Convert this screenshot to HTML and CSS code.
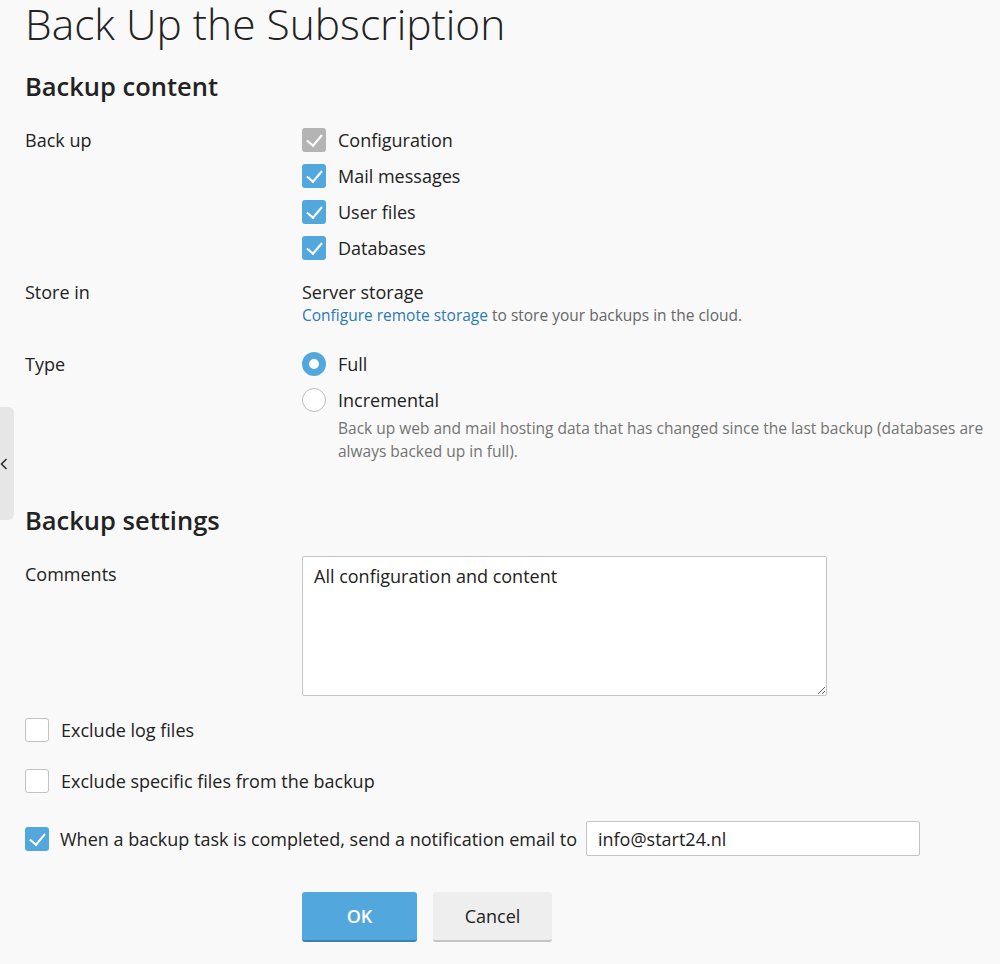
FILE: index.html
```html
<!DOCTYPE html>
<html>

<head>
    <meta charset="utf-8">
    <title>Back Up the Subscription</title>
    <link rel="stylesheet" href="styles.css">
</head>

<body>
    <div class="side-tab">
        <svg width="8" height="12" viewBox="0 0 8 12"><path d="M6.5 1 L1.5 6 L6.5 11" fill="none" stroke="#222" stroke-width="1.4"/></svg>
    </div>

    <div class="page">
        <h1 class="page-title">Back Up the Subscription</h1>

        <!-- backup content -->
        <h2 class="section-title first">Backup content</h2>

        <div class="form-row">
            <div class="form-label">Back up</div>
            <div class="form-field">
                <ul class="check-list">
                    <li class="check-item"><span class="box disabled"></span>Configuration</li>
                    <li class="check-item"><span class="box checked"></span>Mail messages</li>
                    <li class="check-item"><span class="box checked"></span>User files</li>
                    <li class="check-item"><span class="box checked"></span>Databases</li>
                </ul>
            </div>
        </div>

        <div class="form-row store-row">
            <div class="form-label">Store in</div>
            <div class="form-field">
                <div class="field-text">Server storage</div>
                <div class="field-hint"><a href="#" class="link">Configure remote storage</a> to store your backups in the cloud.</div>
            </div>
        </div>

        <div class="form-row type-row">
            <div class="form-label">Type</div>
            <div class="form-field">
                <ul class="check-list">
                    <li class="check-item"><span class="radio selected"></span>Full</li>
                    <li class="check-item"><span class="radio"></span>Incremental</li>
                </ul>
                <div class="radio-desc">Back up web and mail hosting data that has changed since the last backup (databases are always backed up in full).</div>
            </div>
        </div>

        <!-- backup settings -->
        <h2 class="section-title">Backup settings</h2>

        <div class="form-row comments-row">
            <div class="form-label comments-label">Comments</div>
            <div class="form-field">
                <textarea class="comments">All configuration and content</textarea>
            </div>
        </div>

        <div class="option-row log-row"><span class="box"></span>Exclude log files</div>
        <div class="option-row specific-row"><span class="box"></span>Exclude specific files from the backup</div>
        <div class="option-row notify-row">
            <span class="box checked"></span>
            <span class="notify-text">When a backup task is completed, send a notification email to</span>
            <input class="email" type="text" value="info@start24.nl">
        </div>

        <div class="buttons">
            <button class="btn btn-ok">OK</button>
            <button class="btn btn-cancel">Cancel</button>
        </div>
    </div>
</body>

</html>
```

FILE: styles.css
```css
body {
    margin: 0;
    background: #f9f9f9;
    color: #222;
    font-family: "Open Sans", "Liberation Sans", sans-serif;
    font-size: 18px;
    line-height: 24px;
}

.side-tab {
    position: absolute;
    left: 0;
    top: 407px;
    width: 14px;
    height: 113px;
    background: #e6e6e6;
    border-radius: 0 6px 6px 0;
    display: flex;
    align-items: center;
}

.page {
    padding: 0 12px 0 25px;
}

.page-title {
    margin: 0;
    padding-top: 1px;
    font-size: 42.5px;
    font-weight: 300;
    line-height: 46px;
}

.section-title {
    margin: 41px 0 0 0;
    font-size: 25.5px;
    font-weight: 600;
    line-height: 32px;
}

.section-title.first {
    margin-top: 23px;
}

.form-row {
    display: grid;
    grid-template-columns: 277px 1fr;
    margin-top: 26px;
}

.store-row {
    margin-top: 20px;
}

.type-row {
    margin-top: 25px;
}

.comments-row {
    margin-top: 20px;
}

.comments-label {
    padding-top: 6px;
}

.check-list {
    list-style: none;
    margin: 0;
    padding: 0;
    display: flex;
    flex-direction: column;
    gap: 12px;
}

.check-item {
    display: flex;
    align-items: center;
    gap: 12px;
}

.box {
    flex: none;
    width: 24px;
    height: 24px;
    box-sizing: border-box;
    border: 1px solid #c2c2c2;
    border-radius: 3px;
    background: #fff;
    position: relative;
}

.box.checked,
.box.disabled {
    border: none;
    background: #52a8dd;
}

.box.disabled {
    background: #b4b4b4;
}

.box.checked::after,
.box.disabled::after {
    content: "";
    position: absolute;
    left: 8px;
    top: 3px;
    width: 7px;
    height: 13px;
    border: solid #fff;
    border-width: 0 2px 2px 0;
    transform: rotate(40deg);
}

.radio {
    flex: none;
    width: 24px;
    height: 24px;
    box-sizing: border-box;
    border: 1.5px solid #bdbdbd;
    border-radius: 50%;
    background: #fff;
}

.radio.selected {
    border: 7.5px solid #52a8dd;
}

.field-hint {
    font-size: 15.5px;
    line-height: 23px;
    color: #666;
}

.link {
    color: #2a7ab8;
    text-decoration: none;
}

.radio-desc {
    margin: 5px 0 0 36px;
    font-size: 15.5px;
    line-height: 23px;
    color: #737373;
}

.comments {
    display: block;
    width: 525px;
    height: 140px;
    box-sizing: border-box;
    margin: 0;
    padding: 7px 11px;
    border: 1px solid #c4c4c4;
    border-radius: 2px;
    background: #fff;
    font-family: inherit;
    font-size: 18px;
    line-height: 24px;
    color: #222;
}

.option-row {
    display: flex;
    align-items: center;
    gap: 12px;
}

.log-row {
    margin-top: 22px;
}

.specific-row {
    margin-top: 27px;
}

.notify-row {
    margin-top: 28px;
    gap: 11px;
}

.email {
    width: 334px;
    height: 35px;
    box-sizing: border-box;
    margin-left: -2px;
    padding: 0 11px;
    border: 1px solid #c4c4c4;
    border-radius: 2px;
    background: #fff;
    font-family: inherit;
    font-size: 18px;
    color: #222;
}

.buttons {
    display: flex;
    gap: 16px;
    margin: 36px 0 0 277px;
}

.btn {
    height: 50px;
    box-sizing: border-box;
    border: none;
    border-radius: 3px;
    font-family: inherit;
    font-size: 18px;
}

.btn-ok {
    width: 115px;
    background: #52a8dd;
    border-bottom: 2px solid #3b82b4;
    color: #fff;
    font-weight: 600;
}

.btn-cancel {
    width: 119px;
    background: #eeeeee;
    border-bottom: 2px solid #c4c4c4;
    color: #222;
}
```
